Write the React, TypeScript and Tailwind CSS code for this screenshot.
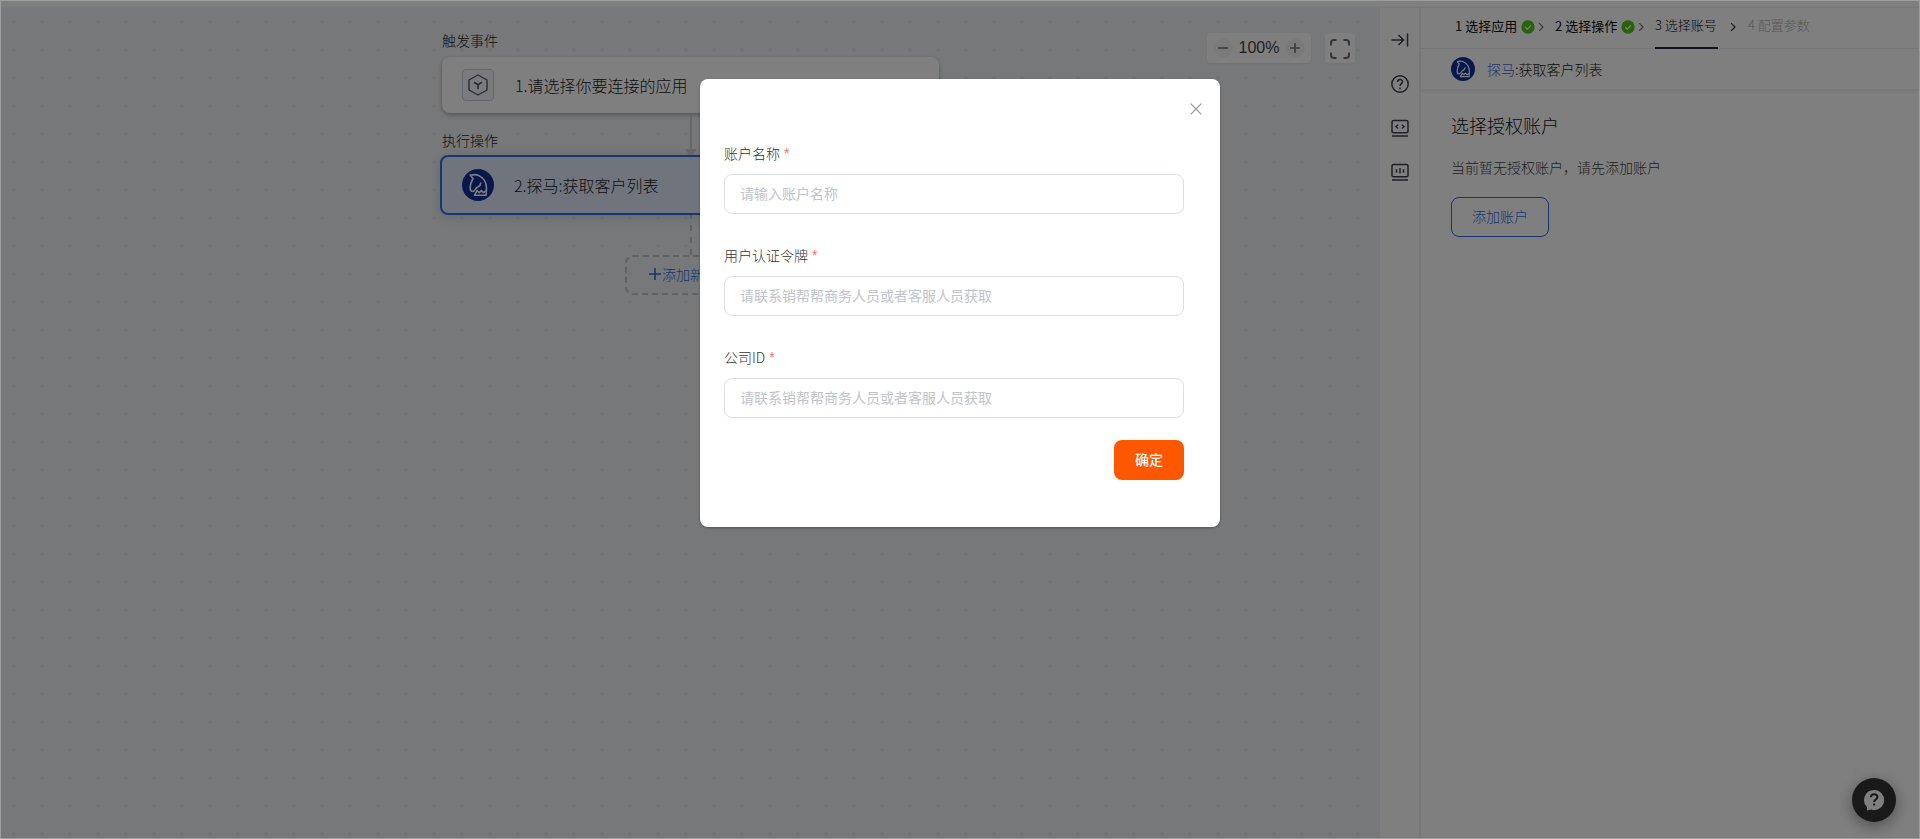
import React from "react";

const FIELDS = [
  { id: "account", label: "账户名称", placeholder: "请输入账户名称" },
  { id: "token", label: "用户认证令牌", placeholder: "请联系销帮帮商务人员或者客服人员获取" },
  { id: "company", label: "公司ID", placeholder: "请联系销帮帮商务人员或者客服人员获取" },
];

function KnightLogo({ className }: { className: string }) {
  return (
    <svg viewBox="0 0 32 32" className={className} fill="none" aria-hidden="true">
      <circle cx="16" cy="16" r="16" fill="#10309a" />
      <path
        d="M8.300 6.200c3-.8 6-.8 8.200.2 4.500 2.200 7.800 7 8 12.400l-.4 7.400H12.500l2.600-4.600 2.200 2 2-2 2 2 2.900-2M8.300 6.200l2.700 3.300c-1.700 3-2.800 6-2.800 9 0 2.500.8 4 2.500 4 1.900 0 2.300-2.600 4.300-4 2-1.300 3.700-1.500 3.700-4.500"
        stroke="#fff"
        strokeWidth="1.600"
        strokeLinejoin="round"
        strokeLinecap="round"
      />
    </svg>
  );
}

function CheckDot() {
  return (
    <svg viewBox="0 0 14 14" className="mt-0.5 size-3.5" aria-hidden="true">
      <circle cx="7" cy="7" r="6.700" fill="#52c41a" />
      <path d="M4.300 7.200l2 1.900 3.600-3.700" fill="none" stroke="#fff" strokeWidth="1.200" />
    </svg>
  );
}

function Chevron({ className }: { className: string }) {
  return (
    <svg viewBox="0 0 6 10" className={className} fill="none" aria-hidden="true">
      <path d="M1.200 1.200L5 5 1.200 8.800" stroke="currentColor" strokeWidth="1.200" />
    </svg>
  );
}

function Canvas() {
  return (
    <main className="relative flex-1 bg-[#edf0f3] bg-[radial-gradient(circle,#e1e4e8_0,#e1e4e8_1.5px,transparent_2px)] bg-[size:28px_28px] bg-[position:-1px_1px]">
      <div className="absolute top-[26px] right-[25px] flex gap-3.5">
        <div className="flex h-[30px] items-center rounded bg-white px-1.5 shadow-xs">
          <button type="button" aria-label="缩小" className="flex size-5 items-center justify-center rounded-full bg-[#f5f5f5]">
            <svg viewBox="0 0 10 10" className="size-2.5"><path d="M0 5h10" stroke="#777" strokeWidth="1.600" /></svg>
          </button>
          <span className="w-[52px] text-center font-['Liberation_Sans',sans-serif] text-base text-[#444]">100%</span>
          <button type="button" aria-label="放大" className="flex size-5 items-center justify-center rounded-full bg-[#f5f5f5]">
            <svg viewBox="0 0 10 10" className="size-2.5"><path d="M0 5h10M5 0v10" stroke="#777" strokeWidth="1.600" /></svg>
          </button>
        </div>
        <button type="button" aria-label="全屏" className="flex size-[30px] items-center justify-center rounded bg-white pt-0.5 shadow-xs">
          <svg viewBox="0 0 20 20" className="size-5" fill="none" stroke="#6a6a6a" strokeWidth="2">
            <path d="M1 6.500V4a3 3 0 0 1 3-3h2.500M13.500 1H16a3 3 0 0 1 3 3v2.500M19 13.500V16a3 3 0 0 1-3 3h-2.500M6.500 19H4a3 3 0 0 1-3-3v-2.500" />
          </svg>
        </button>
      </div>

      <div className="mx-auto w-[501px] pt-[23px]">
        <h2 className="mx-0.5 text-sm leading-5 text-[#222]">触发事件</h2>
        <div className="mx-0.5 mt-[7px] flex h-14 items-center rounded-lg bg-white px-5 shadow-[0_2px_4px_rgba(40,45,60,0.35)]">
          <span className="flex size-8 items-center justify-center rounded border border-[#c9cede] bg-[#f5f6fa]">
            <svg viewBox="0 0 20 22" className="h-[22px] w-5" fill="none" stroke="#555869" strokeWidth="1.400" strokeLinejoin="round">
              <path d="M10 1l9 5v10l-9 5-9-5V6z" />
              <path d="M6 8.200l4 2.600 4-2.600M10 10.800v4.200" strokeWidth="1.700" />
            </svg>
          </span>
          <span className="ml-[21px] text-base text-[#222]">1.请选择你要连接的应用</span>
        </div>
        <svg viewBox="0 0 12 42" className="mx-auto -mb-[25px] block h-[42px] w-3" aria-hidden="true">
          <path d="M6 2v34" stroke="#cfcfcf" strokeWidth="2" />
          <path d="M0 36h12l-4 6H4z" fill="#cfcfcf" />
        </svg>
        <h2 className="mx-0.5 text-sm leading-5 text-[#222]">执行操作</h2>
        <div className="mt-[5px] flex h-[60px] items-center rounded-lg border-2 border-[#2e6be6] bg-[#e1e8fb] px-5 shadow-[0_2px_12px_rgba(40,45,60,0.15)]">
          <KnightLogo className="size-8" />
          <span className="ml-5 text-base text-[#222]">2.探马:获取客户列表</span>
        </div>
        <svg viewBox="0 0 2 40" className="mx-auto block h-10 w-0.5" aria-hidden="true">
          <path d="M1 0v40" stroke="#c4c4c4" strokeWidth="2" strokeDasharray="6 6" strokeDashoffset="2" />
        </svg>
        <button type="button" className="mx-auto flex h-10 w-[131px] items-center justify-center gap-px rounded-lg border-2 border-dashed border-[#c4c4c4] pb-0.5 text-sm text-[#2e6be6]">
          <svg viewBox="0 0 12 12" className="size-3"><path d="M0 6h12M6 0v12" stroke="currentColor" strokeWidth="1.600" /></svg>
          添加新操作
        </button>
      </div>
    </main>
  );
}

function ToolRail() {
  const box = "M3.500 2.500h13a1.500 1.500 0 0 1 1.500 1.500v9.200a1.500 1.500 0 0 1-1.500 1.500h-13A1.500 1.500 0 0 1 2 13.200V4a1.500 1.500 0 0 1 1.500-1.500zM2 18h16";
  const icon = "size-5";
  return (
    <nav className="flex w-[39px] flex-col items-center gap-6 border-t border-[#ebebeb] bg-white pt-[22px] text-[#3f404d]">
      <button type="button" aria-label="收起">
        <svg viewBox="0 0 20 20" className={icon} fill="none" stroke="currentColor" strokeWidth="1.500">
          <path d="M1.500 10h12M8.500 5l5 5-5 5M17.500 3.500v13" />
        </svg>
      </button>
      <button type="button" aria-label="帮助">
        <svg viewBox="0 0 20 20" className={icon} fill="none" stroke="currentColor" strokeWidth="1.500">
          <circle cx="10" cy="10" r="8.200" />
          <path d="M7.600 7.900c0-3.200 4.900-3 4.900-.2 0 1.900-2.500 2-2.500 4.300M10 13.600v1.600" />
        </svg>
      </button>
      <button type="button" aria-label="代码">
        <svg viewBox="0 0 20 20" className={icon} fill="none" stroke="currentColor" strokeWidth="1.500">
          <path d={box} />
          <path d="M8.200 6.800L5.800 8.600l2.400 1.800M11.800 6.800l2.400 1.800-2.400 1.800" strokeWidth="1.300" />
        </svg>
      </button>
      <button type="button" aria-label="数据">
        <svg viewBox="0 0 20 20" className={icon} fill="none" stroke="currentColor" strokeWidth="1.500">
          <path d={box} />
          <path d="M6.500 7.200v3.600M10 6v5.500M13.500 7.200v3.600" />
        </svg>
      </button>
    </nav>
  );
}

function ConfigPanel() {
  return (
    <aside className="w-[500px] border-t border-l-2 border-t-[#ebebeb] border-l-[#f0f0f0] bg-white">
      <ol className="flex h-[41px] border-b border-[#f0f0f0] pl-[34px] text-[13px] leading-[34px] text-[#111]">
        <li className="flex h-9 w-[100px] items-center font-normal">
          <span className="w-[66px] whitespace-nowrap">1 选择应用</span>
          <CheckDot />
          <Chevron className="ml-[3px] mt-0.5 h-2.5 w-1.5 text-[#777]" />
        </li>
        <li className="flex h-9 w-[100px] items-center font-normal">
          <span className="w-[66px] whitespace-nowrap">2 选择操作</span>
          <CheckDot />
          <Chevron className="ml-[3px] mt-0.5 h-2.5 w-1.5 text-[#777]" />
        </li>
        <li className="flex">
          <span className="h-[41px] w-[63px] whitespace-nowrap border-b-2 border-[#25253a]">3 选择账号</span>
          <Chevron className="mt-3.5 ml-3 h-2.5 w-1.5 text-[#333]" />
        </li>
        <li className="ml-3 text-[#b0b0b0]">4 配置参数</li>
      </ol>
      <div className="flex h-10 items-center gap-3 pl-[30px] text-sm text-[#222] shadow-[0_2px_4px_rgba(0,0,0,0.08)]">
        <KnightLogo className="size-6" />
        <span><span className="text-[#2e6be6]">探马</span>:获取客户列表</span>
      </div>
      <section className="px-[30px] pt-6">
        <h1 className="text-lg leading-6 text-[#111]">选择授权账户</h1>
        <p className="mt-5 text-sm leading-5 text-[#444]">当前暂无授权账户，请先添加账户</p>
        <button type="button" className="mt-5 h-10 rounded-lg border border-[#2e6be6] px-5 pb-0.5 text-sm text-[#2e6be6]">添加账户</button>
      </section>
    </aside>
  );
}

export default function App() {
  return (
    <div className="relative flex min-h-screen flex-col bg-[#9c9d9d] p-px font-['Noto_Sans_CJK_SC',sans-serif] font-light">
      <div className="h-1.5 bg-white" />
      <div className="flex flex-1">
        <Canvas />
        <ToolRail />
        <ConfigPanel />
      </div>
      <button type="button" aria-label="在线客服" className="absolute right-6 bottom-[17px] flex size-11 items-center justify-center rounded-full bg-[#333] shadow-[0_4px_16px_rgba(0,0,0,0.4)]">
        <svg viewBox="0 0 22 22" className="size-[22px]" aria-hidden="true">
          <path d="M11 1a10 10 0 1 1-3 19.500L4 21.500v-3.400A10 10 0 0 1 11 1z" fill="#fff" />
          <path d="M7.800 8.300c.2-4.100 6.700-3.900 6.700-.2 0 2.500-3.400 2.400-3.400 5M11.100 14.500v2.100" fill="none" stroke="#333" strokeWidth="2" />
        </svg>
      </button>

      <div className="absolute inset-px flex items-start justify-center bg-black/50 pt-[78px]">
        <form role="dialog" aria-modal="true" className="relative w-[520px] rounded-lg bg-white pt-16 pr-9 pb-[47px] pl-6 shadow-[0_1px_3px_rgba(0,0,0,0.3)]">
          <button type="button" aria-label="关闭" className="absolute top-6 right-[18px] flex size-3 items-center justify-center text-[#909399]">
            <svg viewBox="0 0 12 12" className="size-3"><path d="M.7.700l10.600 10.600M11.300.700L.700 11.300" stroke="currentColor" strokeWidth="1.200" /></svg>
          </button>
          <div className="flex flex-col gap-[31px]">
            {FIELDS.map((f) => (
              <div key={f.id}>
                <label htmlFor={f.id} className="flex h-5 gap-1 text-sm leading-5 text-[#333]">
                  {f.label}
                  <span className="font-['Liberation_Sans',sans-serif] font-normal text-[#f56c6c]">*</span>
                </label>
                <input
                  id={f.id}
                  type="text"
                  placeholder={f.placeholder}
                  className="mt-[11px] block h-10 w-full rounded-lg border border-[#dcdfe6] px-[15px] pb-0.5 text-sm font-normal outline-none placeholder:text-[#c0c4cc]"
                />
              </div>
            ))}
          </div>
          <button type="submit" className="mt-[22px] ml-auto block h-10 w-[70px] rounded-lg bg-[#ff5600] pb-0.5 text-sm font-medium text-white">确定</button>
        </form>
      </div>
    </div>
  );
}
